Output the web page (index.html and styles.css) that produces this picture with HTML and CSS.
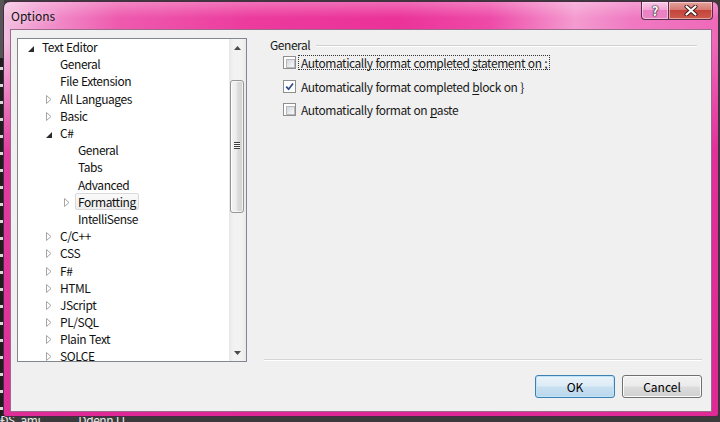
FILE: index.html
```html
<!DOCTYPE html>
<html>
<head>
<meta charset="utf-8">
<link rel="stylesheet" href="styles.css">
</head>
<body>
<div class="desk">
  <div class="edge-left"></div>
  <div class="behind-text"><span>ĐS. ami</span><span class="b2">Ddenn l l</span></div>

  <div class="window">
    <div class="titlebar">
      <span class="title">Options</span>
      <div class="caps">
        <div class="cap help"><span>?</span></div>
        <div class="cap close">
          <svg width="14" height="11" viewBox="0 0 14 11"><path d="M2.5 1.5 L11.5 9.5 M11.5 1.5 L2.5 9.5" stroke="#3a1818" stroke-width="4" stroke-linecap="round"/><path d="M2.5 1.5 L11.5 9.5 M11.5 1.5 L2.5 9.5" stroke="#fff" stroke-width="2.2" stroke-linecap="round"/></svg>
        </div>
      </div>
    </div>

    <div class="client">
      <div class="main">
        <div class="tree">
          <div class="items">
            <div class="item l0"><span class="tw"><svg width="6" height="6" viewBox="0 0 6 6"><path d="M6 0 L6 6 L0 6 Z" fill="#2b2b2b"/></svg></span><span class="lbl">Text Editor</span></div>
            <div class="item l1"><span class="tw"></span><span class="lbl">General</span></div>
            <div class="item l1"><span class="tw"></span><span class="lbl">File Extension</span></div>
            <div class="item l1"><span class="tw"><svg class="col" width="6" height="9" viewBox="0 0 6 9"><path d="M0.5 0.5 L5 4.5 L0.5 8.5 Z" fill="#fff" stroke="#a6a6a6"/></svg></span><span class="lbl">All Languages</span></div>
            <div class="item l1"><span class="tw"><svg class="col" width="6" height="9" viewBox="0 0 6 9"><path d="M0.5 0.5 L5 4.5 L0.5 8.5 Z" fill="#fff" stroke="#a6a6a6"/></svg></span><span class="lbl">Basic</span></div>
            <div class="item l1"><span class="tw"><svg width="6" height="6" viewBox="0 0 6 6"><path d="M6 0 L6 6 L0 6 Z" fill="#2b2b2b"/></svg></span><span class="lbl">C#</span></div>
            <div class="item l2"><span class="tw"></span><span class="lbl">General</span></div>
            <div class="item l2"><span class="tw"></span><span class="lbl">Tabs</span></div>
            <div class="item l2"><span class="tw"></span><span class="lbl">Advanced</span></div>
            <div class="item l2"><span class="tw"><svg class="col" width="6" height="9" viewBox="0 0 6 9"><path d="M0.5 0.5 L5 4.5 L0.5 8.5 Z" fill="#fff" stroke="#a6a6a6"/></svg></span><span class="lbl sel">Formatting</span></div>
            <div class="item l2"><span class="tw"></span><span class="lbl">IntelliSense</span></div>
            <div class="item l1"><span class="tw"><svg class="col" width="6" height="9" viewBox="0 0 6 9"><path d="M0.5 0.5 L5 4.5 L0.5 8.5 Z" fill="#fff" stroke="#a6a6a6"/></svg></span><span class="lbl">C/C++</span></div>
            <div class="item l1"><span class="tw"><svg class="col" width="6" height="9" viewBox="0 0 6 9"><path d="M0.5 0.5 L5 4.5 L0.5 8.5 Z" fill="#fff" stroke="#a6a6a6"/></svg></span><span class="lbl">CSS</span></div>
            <div class="item l1"><span class="tw"><svg class="col" width="6" height="9" viewBox="0 0 6 9"><path d="M0.5 0.5 L5 4.5 L0.5 8.5 Z" fill="#fff" stroke="#a6a6a6"/></svg></span><span class="lbl">F#</span></div>
            <div class="item l1"><span class="tw"><svg class="col" width="6" height="9" viewBox="0 0 6 9"><path d="M0.5 0.5 L5 4.5 L0.5 8.5 Z" fill="#fff" stroke="#a6a6a6"/></svg></span><span class="lbl">HTML</span></div>
            <div class="item l1"><span class="tw"><svg class="col" width="6" height="9" viewBox="0 0 6 9"><path d="M0.5 0.5 L5 4.5 L0.5 8.5 Z" fill="#fff" stroke="#a6a6a6"/></svg></span><span class="lbl">JScript</span></div>
            <div class="item l1"><span class="tw"><svg class="col" width="6" height="9" viewBox="0 0 6 9"><path d="M0.5 0.5 L5 4.5 L0.5 8.5 Z" fill="#fff" stroke="#a6a6a6"/></svg></span><span class="lbl">PL/SQL</span></div>
            <div class="item l1"><span class="tw"><svg class="col" width="6" height="9" viewBox="0 0 6 9"><path d="M0.5 0.5 L5 4.5 L0.5 8.5 Z" fill="#fff" stroke="#a6a6a6"/></svg></span><span class="lbl">Plain Text</span></div>
            <div class="item l1"><span class="tw"><svg class="col" width="6" height="9" viewBox="0 0 6 9"><path d="M0.5 0.5 L5 4.5 L0.5 8.5 Z" fill="#fff" stroke="#a6a6a6"/></svg></span><span class="lbl">SOLCE</span></div>
          </div>
          <div class="scroll">
            <div class="sbtn"><svg width="7" height="4" viewBox="0 0 7 4"><path d="M3.5 0 L7 4 L0 4 Z" fill="#4a4a4a"/></svg></div>
            <div class="thumb"><span class="grip"></span></div>
            <div class="track"></div>
            <div class="sbtn"><svg width="7" height="4" viewBox="0 0 7 4"><path d="M0 0 L7 0 L3.5 4 Z" fill="#4a4a4a"/></svg></div>
          </div>
        </div>

        <div class="pane">
          <div class="ghead"><span>General</span><span class="gline"></span></div>
          <div class="opt">
            <span class="cb"></span>
            <span class="otext focus">Automatically format completed <u>s</u>tatement on ;</span>
          </div>
          <div class="opt">
            <span class="cb checked"><svg width="9" height="9" viewBox="0 0 9 9"><path d="M1.2 4.6 L3.6 7.2 L8 1.4" fill="none" stroke="#2f4c8a" stroke-width="1.7"/></svg></span>
            <span class="otext">Automatically format completed <u>b</u>lock on }</span>
          </div>
          <div class="opt">
            <span class="cb"></span>
            <span class="otext">Automatically format on <u>p</u>aste</span>
          </div>
        </div>
      </div>

      <div class="footer">
        <button class="btn ok">OK</button>
        <button class="btn">Cancel</button>
      </div>
    </div>
  </div>
</div>
</body>
</html>
```
FILE: styles.css
```css
* { box-sizing: border-box; }
html, body { margin: 0; padding: 0; }
body {
  width: 720px;
  height: 422px;
  overflow: hidden;
  background: #3b3b3b;
  font-family: "Noto Sans CJK KR", "Noto Sans", sans-serif;
  font-size: 12px;
  letter-spacing: -0.45px;
  word-spacing: 0.6px;
  color: #1a1a1a;
}
.desk { position: relative; width: 720px; height: 422px; }

.edge-left {
  position: absolute;
  left: 0; top: 0;
  width: 4px; height: 422px;
  background:
    repeating-linear-gradient(180deg, #1e1e1e 0 9px, #d8d8d8 9px 12px, #1e1e1e 12px 17px) 0 58px / 4px 360px no-repeat,
    #555;
}
.behind-text {
  position: absolute;
  left: 0; top: 413px;
  color: #ececec;
  font-size: 12px;
  line-height: 14px;
  white-space: nowrap;
}
.behind-text .b2 { margin-left: 38px; }

/* window */
.window {
  position: absolute;
  left: 3px; top: 1px;
  width: 716px; height: 416px;
  border: 1px solid #4a2a44;
  border-radius: 7px 7px 3px 3px;
  display: flex;
  flex-direction: column;
  background:
    linear-gradient(180deg, rgba(255,255,255,0.28) 0, rgba(255,255,255,0) 16px),
    linear-gradient(180deg, rgba(222,38,148,0) 40px, rgba(222,38,148,0.85) 150px, rgba(222,38,148,0.95) 100%),
    linear-gradient(90deg, #f3c0e0 0%, #f197cf 5%, #ee5aae 16%, #ec3a9d 35%, #eb3299 55%, #ee4aa8 68%, #f49bd0 80%, #f079c2 88%, #ef69b9 100%);
}
.titlebar {
  height: 27px;
  flex: none;
  display: flex;
  align-items: flex-start;
  padding-left: 7px;
}
.title {
  margin-top: 6px;
  line-height: 16px;
  color: #111;
  letter-spacing: 0;
  text-shadow: 0 0 6px rgba(255,255,255,0.7);
}
.caps {
  margin-left: auto;
  margin-right: 5px;
  display: flex;
}
.cap {
  height: 18px;
  border: 1px solid #5a2c4c;
  border-top: none;
  display: flex;
  align-items: center;
  justify-content: center;
  box-shadow: inset 0 0 0 1px rgba(255,255,255,0.45);
}
.help {
  width: 27px;
  border-right: none;
  border-radius: 0 0 0 4px;
  background: linear-gradient(180deg, rgba(255,255,255,0.45) 0, rgba(255,255,255,0.2) 50%, rgba(220,120,190,0.35) 50%, rgba(230,150,200,0.5) 100%);
}
.help span {
  color: #fff;
  font-weight: bold;
  font-size: 13px;
  line-height: 14px;
  letter-spacing: 0;
  text-shadow: 0 0 1px #222, 0 0 1px #222, 0 0 2px #222;
}
.close {
  width: 45px;
  border-radius: 0 0 4px 0;
  background: linear-gradient(180deg, #e4a29c 0, #d57a72 45%, #c4443b 50%, #cf5a4e 100%);
}

/* client */
.client {
  flex: 1;
  margin: 0 6px 4px 6px;
  border: 1px solid #9b6a8c;
  background: #f0f0f0;
  display: flex;
  flex-direction: column;
  padding: 8px 9px 0 6px;
}
.main {
  display: flex;
  align-items: flex-start;
}
.tree {
  width: 230px;
  height: 324px;
  border: 1px solid #828790;
  background: #fff;
  display: flex;
  flex: none;
}
.items {
  flex: 1;
  overflow: hidden;
}
.item {
  display: flex;
  align-items: center;
  height: 17.2px;
  white-space: nowrap;
  margin-top: -1px;
  margin-bottom: 1px;
}
.l0 { padding-left: 6px; }
.l1 { padding-left: 24px; }
.l2 { padding-left: 42px; }
.tw {
  width: 14px;
  height: 100%;
  flex: none;
  display: flex;
  align-items: center;
  justify-content: flex-end;
  padding-right: 4px;
}
.tw svg { display: block; margin-top: 4px; }
.tw svg.col { margin-top: 2px; }
.lbl {
  margin-left: 1px;
  padding: 0 2px;
  border: 1px solid transparent;
  border-radius: 2px;
  line-height: 15px;
  color: #111;
}
.lbl.sel {
  border-color: #d9d9d9;
  background: linear-gradient(180deg, #fafafa, #eeeeee);
}

.scroll {
  width: 17px;
  flex: none;
  display: flex;
  flex-direction: column;
  background: linear-gradient(90deg, #e6e6e6 0, #f2f2f2 25%, #f2f2f2 75%, #e9e9e9 100%);
}
.sbtn {
  height: 17px;
  display: flex;
  align-items: center;
  justify-content: center;
  flex: none;
}
.thumb {
  margin: 24px 2px 0 1px;
  height: 133px;
  border: 1px solid #959595;
  border-radius: 3px;
  background: linear-gradient(90deg, #f4f4f4 0, #ececec 45%, #dcdcdc 55%, #d2d2d2 100%);
  box-shadow: inset 0 0 0 1px rgba(255,255,255,0.7);
  display: flex;
  align-items: center;
  justify-content: center;
  flex: none;
}
.grip {
  width: 6px;
  height: 7px;
  margin-top: -2px;
  background: repeating-linear-gradient(180deg, #3c3c3c 0 1px, #f8f8f8 1px 2px);
}
.track { flex: 1; }

.pane {
  flex: 1;
  margin-left: 17px;
  height: 322px;
  border-bottom: 1px solid #d5d5d5;
  box-shadow: 0 1px 0 #fff;
}
.ghead {
  display: flex;
  align-items: center;
  height: 13px;
  line-height: 13px;
  padding-left: 6px;
  padding-right: 5px;
  color: #1a1a1a;
}
.gline {
  flex: 1;
  height: 1px;
  margin-left: 6px;
  margin-top: 1px;
  background: #d0d0d0;
  box-shadow: 0 1px 0 #fff;
}
.opt {
  display: flex;
  align-items: center;
  height: 23.5px;
  padding-left: 19px;
  color: #1a1a1a;
}
.cb {
  width: 13px;
  height: 13px;
  border: 1px solid #8e8f8f;
  background: #fff;
  flex: none;
  position: relative;
  display: flex;
  align-items: center;
  justify-content: center;
}
.cb::before {
  content: "";
  position: absolute;
  left: 2px; top: 2px;
  width: 7px; height: 7px;
  border: 1px solid #b5b9be;
  background: linear-gradient(135deg, #d2d6db 0, #eef0f2 70%, #f7f7f7 100%);
}
.cb.checked::before { display: none; }
.cb svg { position: relative; display: block; }
.otext {
  margin-left: 2px;
  padding: 0 2px;
  border: 1px dotted transparent;
  line-height: 13px;
}
.otext.focus { border-color: #333; }
.otext u { text-underline-offset: 2px; }

.footer {
  display: flex;
  justify-content: flex-end;
  gap: 7px;
  padding-top: 13px;
}
.btn {
  width: 80px;
  height: 23px;
  margin: 0;
  padding: 0;
  font: inherit;
  letter-spacing: 0;
  word-spacing: 0;
  color: #000;
  border: 1px solid #707070;
  border-radius: 3px;
  background: linear-gradient(180deg, #f2f2f2 0, #ebebeb 48%, #dddddd 52%, #cfcfcf 100%);
  box-shadow: inset 0 0 0 1px #fbfbfb;
}
.btn.ok {
  border-color: #3c7fb1;
  background: linear-gradient(180deg, #eaf3fa 0, #dcebf6 48%, #c9e0f1 52%, #b9d6ec 100%);
  box-shadow: inset 0 0 0 1px #bfe3f9;
}
```
